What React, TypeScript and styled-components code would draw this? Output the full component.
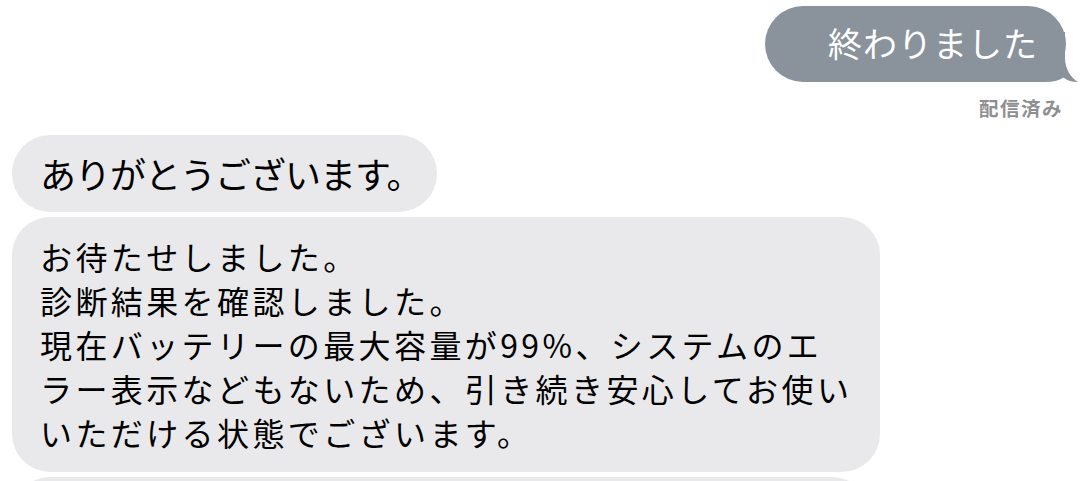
import { FC, ReactNode } from 'react'
import styled, { createGlobalStyle } from 'styled-components'

const GlobalStyle = createGlobalStyle`
  html, body {
    margin: 0;
    padding: 0;
    background: #ffffff;
    overflow: hidden;
  }
  body {
    font-family: 'Noto Sans CJK JP', 'Noto Sans', sans-serif;
    -webkit-font-smoothing: antialiased;
  }
`

const SENT_COLOR = '#8a929c'
const RECEIVED_COLOR = '#e9e9eb'

interface BubbleProps {
  width: number
  children?: ReactNode
}

const SentBubble: FC<BubbleProps> = ({ width, children }) => {
  return (
    <SentWrap $width={width}>
      {children}
      <Tail viewBox="0 0 50 50" width={50} height={50}>
        <path
          d="M0 0 H36 V26 C36 37 42 46 49 50 C43 50 38 48.5 34.5 45.5 C30 48.5 24 50 16 50 H0 Z"
          fill={SENT_COLOR}
        />
      </Tail>
    </SentWrap>
  )
}

const App: FC = () => {
  const lines = [
    'お待たせしました。',
    '診断結果を確認しました。',
    '現在バッテリーの最大容量が99%、システムのエ',
    'ラー表示などもないため、引き続き安心してお使い',
    'いただける状態でございます。',
  ]

  return (
    <>
      <GlobalStyle />
      <Thread>
        <SentRow>
          <SentBubble width={301}>
            <SentText>終わりました</SentText>
          </SentBubble>
        </SentRow>
        <Status>配信済み</Status>
        <ReceivedGroup>
          <ReceivedBubble $width={425} $padding="16px 15px 17px 28px">
            <ShortText>ありがとうございます。</ShortText>
          </ReceivedBubble>
          <ReceivedBubble $width={868} $padding="17px 20px 18px 28px">
            {lines.map((line) => (
              <LongLine key={line}>{line}</LongLine>
            ))}
          </ReceivedBubble>
          <ReceivedBubble $width={858} $padding="0" $height={80} />
        </ReceivedGroup>
      </Thread>
    </>
  )
}

export default App

const Thread = styled.div`
  display: flex;
  flex-direction: column;
  padding: 6px 14px 0 12px;
  width: 1080px;
  height: 481px;
  box-sizing: border-box;
  overflow: hidden;
`

const SentRow = styled.div`
  display: flex;
  justify-content: flex-end;
`

const SentWrap = styled.div<{ $width: number }>`
  position: relative;
  width: ${(p) => p.$width}px;
  height: 76px;
  box-sizing: border-box;
  padding: 0 28px 0 63px;
  display: flex;
  align-items: center;
  background: ${SENT_COLOR};
  border-radius: 38px;
`

const Tail = styled.svg`
  position: absolute;
  right: -13px;
  bottom: 0;
  display: block;
`

const SentText = styled.span`
  position: relative;
  z-index: 1;
  color: #ffffff;
  font-size: 34px;
  line-height: 44px;
  letter-spacing: 1px;
  white-space: nowrap;
  margin-top: -2px;
`

const Status = styled.div`
  align-self: flex-end;
  margin: 14px 3px 0 0;
  font-size: 19.5px;
  line-height: 24px;
  font-weight: 600;
  letter-spacing: 1.5px;
  color: #8e8e93;
`

const ReceivedGroup = styled.div`
  display: flex;
  flex-direction: column;
  align-items: flex-start;
  gap: 5px;
  margin-top: 15px;
`

const ReceivedBubble = styled.div<{ $width: number; $padding: string; $height?: number }>`
  width: ${(p) => p.$width}px;
  ${(p) => (p.$height ? `height: ${p.$height}px;` : '')}
  flex-shrink: 0;
  box-sizing: border-box;
  padding: ${(p) => p.$padding};
  background: ${RECEIVED_COLOR};
  border-radius: 38px;
  color: #000000;
`

const ShortText = styled.div`
  font-size: 36px;
  line-height: 44px;
  font-weight: 400;
  letter-spacing: -1px;
  white-space: nowrap;
`

const LongLine = styled.div`
  font-size: 32px;
  line-height: 44px;
  font-weight: 400;
  letter-spacing: 3.4px;
  white-space: nowrap;
`
